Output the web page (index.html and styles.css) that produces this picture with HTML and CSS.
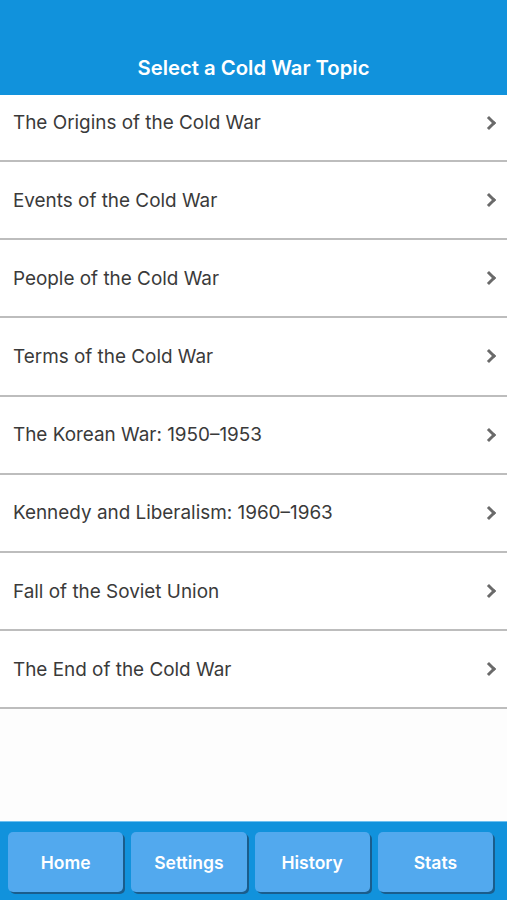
FILE: index.html
```html
<!DOCTYPE html>
<html lang="en">
<head>
<meta charset="UTF-8">
<meta name="viewport" content="width=device-width, initial-scale=1.0">
<title>Cold War Topics</title>
<link rel="stylesheet" href="styles.css">
</head>
<body>
<div class="app">
    <div class="header">
        <h1>Select a Cold War Topic</h1>
    </div>
    <ul class="topics">
        <li class="topic first">The Origins of the Cold War<span class="chev"></span></li>
        <li class="topic">Events of the Cold War<span class="chev"></span></li>
        <li class="topic">People of the Cold War<span class="chev"></span></li>
        <li class="topic">Terms of the Cold War<span class="chev"></span></li>
        <li class="topic">The Korean War: 1950–1953<span class="chev"></span></li>
        <li class="topic">Kennedy and Liberalism: 1960–1963<span class="chev"></span></li>
        <li class="topic">Fall of the Soviet Union<span class="chev"></span></li>
        <li class="topic">The End of the Cold War<span class="chev"></span></li>
    </ul>
    <div class="footer">
        <button class="tab">Home</button>
        <button class="tab">Settings</button>
        <button class="tab">History</button>
        <button class="tab">Stats</button>
    </div>
</div>
</body>
</html>
```

FILE: styles.css
```css
body {
    margin: 0;
    padding: 0;
    font-family: Inter, 'Liberation Sans', sans-serif;
    background-color: #fdfdfd;
}
.app {
    display: flex;
    flex-direction: column;
    height: 900px;
}
.header {
    background-color: #1192dc;
    height: 95px;
    display: flex;
    align-items: flex-end;
    justify-content: center;
    box-sizing: border-box;
    padding-bottom: 15px;
}
.header h1 {
    margin: 0;
    color: #fff;
    font-size: 20.3px;
    font-weight: 600;
}
.topics {
    list-style: none;
    margin: 0;
    padding: 0;
    flex: 1;
}
.topic {
    display: flex;
    align-items: center;
    justify-content: space-between;
    height: 76.2px;
    padding: 0 11px 0 13px;
    background-color: #fff;
    border-bottom: 2px solid #bdbdbd;
    color: #3a3a3a;
    font-size: 18.9px;
}
.topic.first {
    box-sizing: border-box;
    height: 67px;
    padding-bottom: 10px;
}
.chev {
    width: 7px;
    height: 7px;
    border-top: 3px solid #6a6a6a;
    border-right: 3px solid #6a6a6a;
    transform: rotate(45deg);
    margin-right: 2px;
}
.footer {
    background-color: #1192dc;
    border-top: 1px solid #6fc0f0;
    height: 79px;
    box-sizing: border-box;
    display: grid;
    grid-template-columns: repeat(4, 1fr);
    gap: 8px;
    padding: 10px 14px 8px 8px;
}
.tab {
    background-color: #52a9ee;
    border: none;
    border-radius: 5px;
    box-shadow: 2px 2px 0 #1a5d8c;
    color: #fff;
    font-family: Inter, 'Liberation Sans', sans-serif;
    font-size: 17.5px;
    font-weight: 600;
}
```
